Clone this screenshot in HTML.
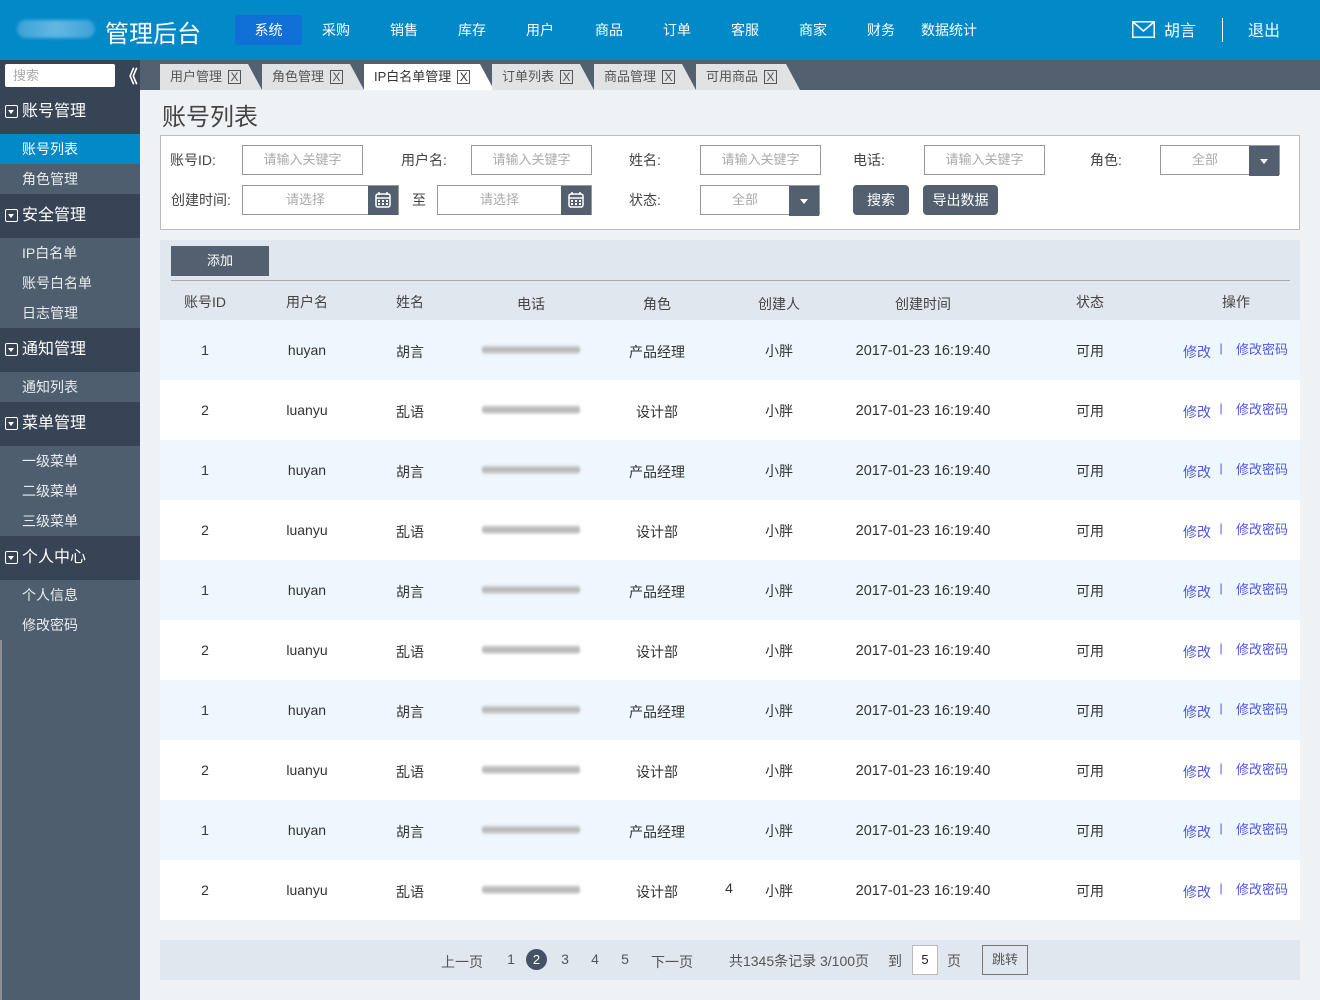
<!DOCTYPE html>
<html><head><meta charset="utf-8">
<style>
*{margin:0;padding:0;box-sizing:border-box}
body{width:1320px;height:1000px;overflow:hidden;background:#eef2f5;font-family:"Liberation Sans","Noto Sans CJK SC",sans-serif;color:#333;position:relative;font-size:14px}
.abs{position:absolute}
#hdr{left:0;top:0;width:1320px;height:60px;background:#0189c8}
.logo{left:17px;top:20px;width:78px;height:18px;border-radius:9px;background:linear-gradient(90deg,#4aa9dc,#7cc3e8,#4aa9dc);filter:blur(1.5px);opacity:.8}
.title{left:105px;top:14px;font-size:24px;color:#fff}
.nav{top:15px;height:30px;line-height:30px;color:#fff;font-size:14px;text-align:center}
.navact{background:#1170d6;border-radius:3px;width:67px;left:235px}
#side{left:0;top:60px;width:140px;height:940px;background:#4f5e6f}
.sh{position:absolute;left:0;width:140px;height:44px;background:#374455;color:#fff;font-size:16px;line-height:44px;padding-left:22px}
.sh:before{content:"";position:absolute;left:5px;top:15px;width:11px;height:11px;border:1.5px solid #fff;border-radius:2px}
.sh:after{content:"";position:absolute;left:8px;top:20px;border:3px solid transparent;border-top:4px solid #fff}
.si{position:absolute;left:0;width:140px;height:30px;line-height:30px;color:#e8ecf0;font-size:14px;padding-left:22px}
#tabbar{left:140px;top:60px;width:1180px;height:30px;background:#526070}
.tab{position:absolute;top:4px;height:26px;background:#e1e2e3;color:#555;font-size:13px;line-height:26px;padding-left:10px;clip-path:polygon(0 0,calc(100% - 14px) 0,100% 100%,0 100%)}
.tab.on{background:#fff;color:#333}
.x{display:inline-block;border:1px solid #555;width:13px;height:14px;line-height:12px;text-align:center;font-size:12px;margin-left:6px;vertical-align:middle;position:relative;top:-1px}
.lbl{font-size:14px;color:#444;line-height:30px}
.inp{height:30px;border:1px solid #999;background:#fff;color:#aaa;font-size:13px;text-align:center;line-height:28px}
.btnd{background:#526070;color:#fff}
.sel .arr{position:absolute;right:0;top:0;width:30px;height:30px;background:#526070}
.sel .arr:after{content:"";position:absolute;left:11px;top:13px;border:4px solid transparent;border-top:5px solid #fff}
#tbl{left:160px;top:240px;width:1140px;height:680px;background:#e1e7ef}
.row{position:absolute;left:0;width:1140px;height:60px}
.c{position:absolute;transform:translateX(-50%);white-space:nowrap;font-size:14px}
.blur{position:absolute;left:322px;height:9px;width:98px;background:linear-gradient(180deg,#e6e6e6,#b0b0b0 50%,#d8d8d8);filter:blur(1.2px);border-radius:3px}
a{color:#4f56e6;text-decoration:none}
</style></head><body>
<div id="hdr" class="abs">
<div class="abs logo"></div>
<div class="abs title">管理后台</div>
<div class="abs nav navact">系统</div>
<div class="abs nav" style="left:304px;width:64px">采购</div>
<div class="abs nav" style="left:372px;width:64px">销售</div>
<div class="abs nav" style="left:440px;width:64px">库存</div>
<div class="abs nav" style="left:508px;width:64px">用户</div>
<div class="abs nav" style="left:577px;width:64px">商品</div>
<div class="abs nav" style="left:645px;width:64px">订单</div>
<div class="abs nav" style="left:713px;width:64px">客服</div>
<div class="abs nav" style="left:781px;width:64px">商家</div>
<div class="abs nav" style="left:849px;width:64px">财务</div>
<div class="abs nav" style="left:920px;width:58px">数据统计</div>
<svg class="abs" style="left:1132px;top:21px" width="23" height="17" viewBox="0 0 23 17"><rect x="0.75" y="0.75" width="21.5" height="15.5" fill="none" stroke="#fff" stroke-width="1.5"/><path d="M1 1 L11.5 10 L22 1" fill="none" stroke="#fff" stroke-width="1.5"/></svg>
<div class="abs" style="left:1164px;top:17px;color:#fff;font-size:16px">胡言</div>
<div class="abs" style="left:1222px;top:18px;width:1px;height:24px;background:#fff"></div>
<div class="abs" style="left:1248px;top:17px;color:#fff;font-size:16px">退出</div>
</div>

<div id="side" class="abs">
<div style="position:absolute;left:0;top:0;width:140px;height:30px;background:#374455"></div>
<div style="position:absolute;left:5px;top:4px;width:110px;height:23px;background:#fff;border-radius:2px;color:#aaa;font-size:13px;line-height:23px;padding-left:8px">搜索</div>
<div style="position:absolute;left:120px;top:3px;color:#fff;font-size:18px;font-weight:bold;letter-spacing:-6px">《</div>
<div class="sh" style="top:30px">账号管理</div>
<div class="si" style="top:74px;background:#0189c8;color:#fff">账号列表</div>
<div class="si" style="top:104px">角色管理</div>
<div class="sh" style="top:134px">安全管理</div>
<div class="si" style="top:178px">IP白名单</div>
<div class="si" style="top:208px">账号白名单</div>
<div class="si" style="top:238px">日志管理</div>
<div class="sh" style="top:268px">通知管理</div>
<div class="si" style="top:312px">通知列表</div>
<div class="sh" style="top:342px">菜单管理</div>
<div class="si" style="top:386px">一级菜单</div>
<div class="si" style="top:416px">二级菜单</div>
<div class="si" style="top:446px">三级菜单</div>
<div class="sh" style="top:476px">个人中心</div>
<div class="si" style="top:520px">个人信息</div>
<div class="si" style="top:550px">修改密码</div>
<div style="position:absolute;left:0;top:580px;width:2px;height:360px;background:#8a8f94"></div>
</div>

<div id="tabbar" class="abs">
<div class="tab" style="left:20px;width:102px">用户管理<span class="x">X</span></div>
<div class="tab" style="left:122px;width:102px">角色管理<span class="x">X</span></div>
<div class="tab on" style="left:224px;width:130px">IP白名单管理<span class="x">X</span></div>
<div class="tab" style="left:352px;width:102px">订单列表<span class="x">X</span></div>
<div class="tab" style="left:454px;width:102px">商品管理<span class="x">X</span></div>
<div class="tab" style="left:556px;width:104px">可用商品<span class="x">X</span></div>
</div>

<div class="abs" style="left:162px;top:97px;font-size:24px;color:#444">账号列表</div>

<div class="abs" style="left:160px;top:135px;width:1140px;height:95px;background:#fff;border:1px solid #bbb">
<div class="abs lbl" style="left:9px;top:9px">账号ID:</div>
<div class="abs inp" style="left:81px;top:9px;width:121px">请输入关键字</div>
<div class="abs lbl" style="left:240px;top:9px">用户名:</div>
<div class="abs inp" style="left:310px;top:9px;width:121px">请输入关键字</div>
<div class="abs lbl" style="left:468px;top:9px">姓名:</div>
<div class="abs inp" style="left:539px;top:9px;width:121px">请输入关键字</div>
<div class="abs lbl" style="left:692px;top:9px">电话:</div>
<div class="abs inp" style="left:763px;top:9px;width:121px">请输入关键字</div>
<div class="abs lbl" style="left:929px;top:9px">角色:</div>
<div class="abs inp sel" style="left:999px;top:9px;width:120px;padding-right:30px">全部<span class="arr"></span></div>
<div class="abs lbl" style="left:10px;top:49px">创建时间:</div>
<div class="abs inp" style="left:81px;top:49px;width:157px;padding-right:30px">请选择<span class="arr" style="position:absolute;right:0;top:0;width:30px;height:29px;background:#526070"><svg width="30" height="29" viewBox="0 0 30 29"><rect x="8" y="8" width="14" height="13" rx="2" fill="none" stroke="#fff" stroke-width="1.5"/><line x1="8" y1="12" x2="22" y2="12" stroke="#fff" stroke-width="1.5"/><line x1="11" y1="6" x2="11" y2="9" stroke="#fff" stroke-width="1.5"/><line x1="19" y1="6" x2="19" y2="9" stroke="#fff" stroke-width="1.5"/><g fill="#fff"><rect x="10" y="14" width="2" height="2"/><rect x="14" y="14" width="2" height="2"/><rect x="18" y="14" width="2" height="2"/><rect x="10" y="17" width="2" height="2"/><rect x="14" y="17" width="2" height="2"/><rect x="18" y="17" width="2" height="2"/></g></svg></span></div>
<div class="abs lbl" style="left:251px;top:49px">至</div>
<div class="abs inp" style="left:276px;top:49px;width:155px;padding-right:30px">请选择<span class="arr" style="position:absolute;right:0;top:0;width:30px;height:29px;background:#526070"><svg width="30" height="29" viewBox="0 0 30 29"><rect x="8" y="8" width="14" height="13" rx="2" fill="none" stroke="#fff" stroke-width="1.5"/><line x1="8" y1="12" x2="22" y2="12" stroke="#fff" stroke-width="1.5"/><line x1="11" y1="6" x2="11" y2="9" stroke="#fff" stroke-width="1.5"/><line x1="19" y1="6" x2="19" y2="9" stroke="#fff" stroke-width="1.5"/><g fill="#fff"><rect x="10" y="14" width="2" height="2"/><rect x="14" y="14" width="2" height="2"/><rect x="18" y="14" width="2" height="2"/><rect x="10" y="17" width="2" height="2"/><rect x="14" y="17" width="2" height="2"/><rect x="18" y="17" width="2" height="2"/></g></svg></span></div>
<div class="abs lbl" style="left:468px;top:49px">状态:</div>
<div class="abs inp sel" style="left:539px;top:49px;width:120px;padding-right:30px">全部<span class="arr"></span></div>
<div class="abs btnd" style="left:692px;top:49px;width:56px;height:30px;border-radius:4px;text-align:center;line-height:30px;font-size:14px">搜索</div>
<div class="abs btnd" style="left:762px;top:49px;width:75px;height:30px;border-radius:4px;text-align:center;line-height:30px;font-size:14px">导出数据</div>
</div>

<div id="tbl" class="abs">
<div class="abs btnd" style="left:11px;top:6px;width:98px;height:30px;line-height:30px;text-align:center;font-size:13px">添加</div>
<div class="abs" style="left:11px;top:40px;width:1119px;height:1px;background:#aaa"></div>
<div class="row" style="top:50px;color:#444">
<span class="c" style="left:45px;top:2px">账号ID</span><span class="c" style="left:147px;top:2px">用户名</span><span class="c" style="left:250px;top:2px">姓名</span><span class="c" style="left:371px;top:4px">电话</span><span class="c" style="left:497px;top:4px">角色</span><span class="c" style="left:619px;top:4px">创建人</span><span class="c" style="left:763px;top:4px">创建时间</span><span class="c" style="left:930px;top:2px">状态</span><span class="c" style="left:1076px;top:2px">操作</span>
</div>
<div id="rows"></div>
</div>

<div class="abs" style="left:160px;top:940px;width:1140px;height:40px;background:#e1e7ef;font-size:13px;color:#555">
<span class="c abs" style="left:302px;top:12px">上一页</span>
<span class="c abs" style="left:351px;top:11px">1</span>
<span class="abs" style="left:366px;top:9px;width:21px;height:21px;border-radius:50%;background:#455263;color:#fff;text-align:center;line-height:21px">2</span>
<span class="c abs" style="left:405px;top:11px">3</span>
<span class="c abs" style="left:435px;top:11px">4</span>
<span class="c abs" style="left:465px;top:11px">5</span>
<span class="c abs" style="left:512px;top:12px">下一页</span>
<span class="c abs" style="left:639px;top:11px">共1345条记录 3/100页</span>
<span class="c abs" style="left:735px;top:11px">到</span>
<span class="abs" style="left:752px;top:5px;width:26px;height:30px;border:1px solid #bbb;background:#fff;color:#222;text-align:center;line-height:28px">5</span>
<span class="c abs" style="left:794px;top:11px">页</span>
<span class="abs" style="left:822px;top:5px;width:46px;height:30px;border:1px solid #777;text-align:center;line-height:28px">跳转</span>
</div>

<script>
var h='';
for(var i=0;i<10;i++){
var o=i%2==0;
h+='<div class="row" style="top:'+(80+i*60)+'px;background:'+(o?'#eef7fe':'#fff')+'">'+
'<span class="c" style="left:45px;top:22px">'+(o?1:2)+'</span>'+
'<span class="c" style="left:147px;top:22px">'+(o?'huyan':'luanyu')+'</span>'+
'<span class="c" style="left:250px;top:22px">'+(o?'胡言':'乱语')+'</span>'+
'<span class="blur" style="top:25px"></span>'+
'<span class="c" style="left:497px;top:22px">'+(o?'产品经理':'设计部')+'</span>'+
(i==9?'<span class="c" style="left:569px;top:20px">4</span>':'')+
'<span class="c" style="left:619px;top:21px">小胖</span>'+
'<span class="c" style="left:763px;top:23px;font-size:14.5px">2017-01-23 16:19:40</span>'+
'<span class="c" style="left:930px;top:21px">可用</span>'+
'<a class="c" style="left:1037px;top:22px">修改</a>'+
'<a class="c" style="left:1061px;top:21px;font-size:12px">|</a>'+
'<a class="c" style="left:1102px;top:19px;font-size:13px">修改密码</a>'+
'</div>';}
document.getElementById('rows').innerHTML=h;
</script>
</body></html>
